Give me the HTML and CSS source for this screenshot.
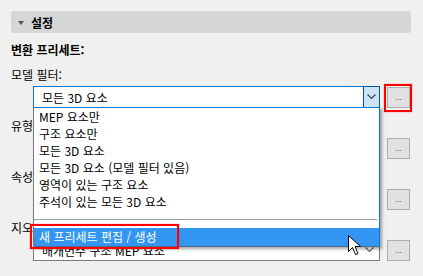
FILE: index.html
```html
<!DOCTYPE html>
<html lang="ko">

<head>
    <meta charset="UTF-8">
    <meta name="viewport" content="width=device-width, initial-scale=1.0">
    <title>설정</title>
    <link rel="stylesheet" href="styles.css">
</head>

<body>
    <div class="panel">
        <div class="section-head">
            <span class="caret"></span>
            <span>설정</span>
        </div>

        <div class="preset-title">변환 프리세트:</div>

        <div class="field">
            <div class="field-label">모델 필터:</div>
            <div class="field-row">
                <div class="combo combo-open">
                    <span class="combo-value">모든 3D 요소</span>
                    <span class="combo-arrow">
                        <svg width="9" height="6" viewBox="0 0 9 6"><polyline points="0.5,0.5 4.5,4.5 8.5,0.5" fill="none" stroke="#404040" stroke-width="1.2"/></svg>
                    </span>
                    <ul class="dropdown">
                        <li>MEP 요소만</li>
                        <li>구조 요소만</li>
                        <li>모든 3D 요소</li>
                        <li>모든 3D 요소 (모델 필터 있음)</li>
                        <li>영역이 있는 구조 요소</li>
                        <li>주석이 있는 모든 3D 요소</li>
                        <li class="separator"></li>
                        <li class="selected">새 프리세트 편집 / 생성<span class="mark mark-item"></span></li>
                    </ul>
                </div>
                <div class="more-wrap">
                    <button class="more-btn">...</button>
                    <span class="mark mark-btn"></span>
                </div>
            </div>
        </div>

        <!-- the next labels are mostly hidden behind the open list -->
        <div class="field">
            <div class="field-label field-label-cut">유형</div>
            <div class="field-row">
                <div class="combo"></div>
                <div class="more-wrap"><button class="more-btn">...</button></div>
            </div>
        </div>

        <div class="field">
            <div class="field-label field-label-cut">속성</div>
            <div class="field-row">
                <div class="combo"></div>
                <div class="more-wrap"><button class="more-btn">...</button></div>
            </div>
        </div>

        <div class="field">
            <div class="field-label field-label-cut">지오</div>
            <div class="field-row">
                <div class="combo">
                    <span class="combo-value">매개변수 구조 MEP 요소</span>
                    <span class="combo-chevron">
                        <svg width="9" height="6" viewBox="0 0 9 6"><polyline points="0.5,0.5 4.5,4.5 8.5,0.5" fill="none" stroke="#606060" stroke-width="1.2"/></svg>
                    </span>
                </div>
                <div class="more-wrap"><button class="more-btn">...</button></div>
            </div>
        </div>
    </div>

    <svg class="cursor" width="14" height="21" viewBox="0 0 14 21">
        <path d="M0.5,0.5 L0.5,16.5 L4.5,12.5 L7.5,19.5 L10,18.5 L7,11.5 L12.5,11.5 Z" fill="#fff" stroke="#000" stroke-width="1"/>
    </svg>
</body>

</html>
```

FILE: styles.css
```css
* {
    margin: 0;
    padding: 0;
    box-sizing: border-box;
}

body {
    background: #f0f0f0;
    font-family: "Noto Sans CJK KR", "Noto Sans", sans-serif;
    font-size: 12px;
    color: #000;
    position: relative;
    height: 276px;
    overflow: hidden;
}

.panel {
    padding: 11px 12px 0 11px;
}

/* collapsible section header */
.section-head {
    height: 22px;
    background: #d6d6d6;
    border-radius: 3px;
    display: flex;
    align-items: center;
    padding-left: 7px;
    font-weight: bold;
    font-size: 12px;
}

.caret {
    width: 0;
    height: 0;
    border-left: 3px solid transparent;
    border-right: 3px solid transparent;
    border-top: 4px solid #555;
    margin-right: 7px;
    margin-top: 1px;
}

.preset-title {
    font-weight: bold;
    line-height: 22px;
    margin-top: 6px;
}

.field {
    margin-top: 3px;
}

.field + .field {
    margin-top: 7px;
}

.field-label {
    line-height: 22px;
    height: 22px;
    white-space: nowrap;
}

.field-label-cut {
    width: 22px;
    overflow: hidden;
}

.field-row {
    display: flex;
    align-items: center;
    padding-left: 22px;
}

.combo {
    position: relative;
    width: 347px;
    height: 22px;
    background: #fff;
    border: 1px solid #7a7a7a;
    display: flex;
    align-items: center;
}

.combo-value {
    flex: 1;
    padding-left: 8px;
    white-space: nowrap;
}

.combo-chevron {
    width: 17px;
    display: flex;
    justify-content: center;
    margin-right: 1px;
}

.combo-open {
    border-color: #0078d7;
}

.combo-arrow {
    width: 17px;
    height: 22px;
    margin: -1px -1px -1px 0;
    background: #cce4f7;
    border: 1px solid #005499;
    display: flex;
    align-items: center;
    justify-content: center;
}

/* open drop-down list */
.dropdown {
    list-style: none;
    position: absolute;
    top: 20px;
    left: -1px;
    width: 347px;
    background: #fff;
    border: 1px solid #0078d7;
    border-left-color: #7a7a7a;
    border-bottom-color: #4a6d91;
    box-shadow: 2px 2px 3px rgba(0, 0, 0, 0.35);
    z-index: 10;
}

.dropdown li {
    height: 17px;
    line-height: 17px;
    padding-left: 5px;
    white-space: nowrap;
}

.dropdown .separator {
    height: 1px;
    background: #a0a0a0;
    margin: 9px 2px 8px 0;
}

.dropdown .selected {
    position: relative;
    height: 18px;
    line-height: 18px;
    background: #3496f3;
    color: #fff;
}

.more-wrap {
    position: relative;
    margin-left: 7px;
}

.more-btn {
    display: block;
    width: 23px;
    height: 21px;
    background: #e1e1e1;
    border: 1px solid #adadad;
    font-family: "DejaVu Sans", sans-serif;
    font-size: 7px;
    line-height: 21px;
    color: #1a3f6a;
    letter-spacing: 0;
}

/* red annotation boxes */
.mark {
    position: absolute;
    border: 2px solid #f00;
    box-shadow: 0 0 1px rgba(255, 0, 0, 0.6);
    pointer-events: none;
}

.mark-btn {
    left: -3px;
    top: -3px;
    width: 28px;
    height: 28px;
}

.mark-item {
    left: -4px;
    top: -4px;
    width: 149px;
    height: 25px;
}

.cursor {
    position: absolute;
    left: 348px;
    top: 235px;
    z-index: 20;
}
```
